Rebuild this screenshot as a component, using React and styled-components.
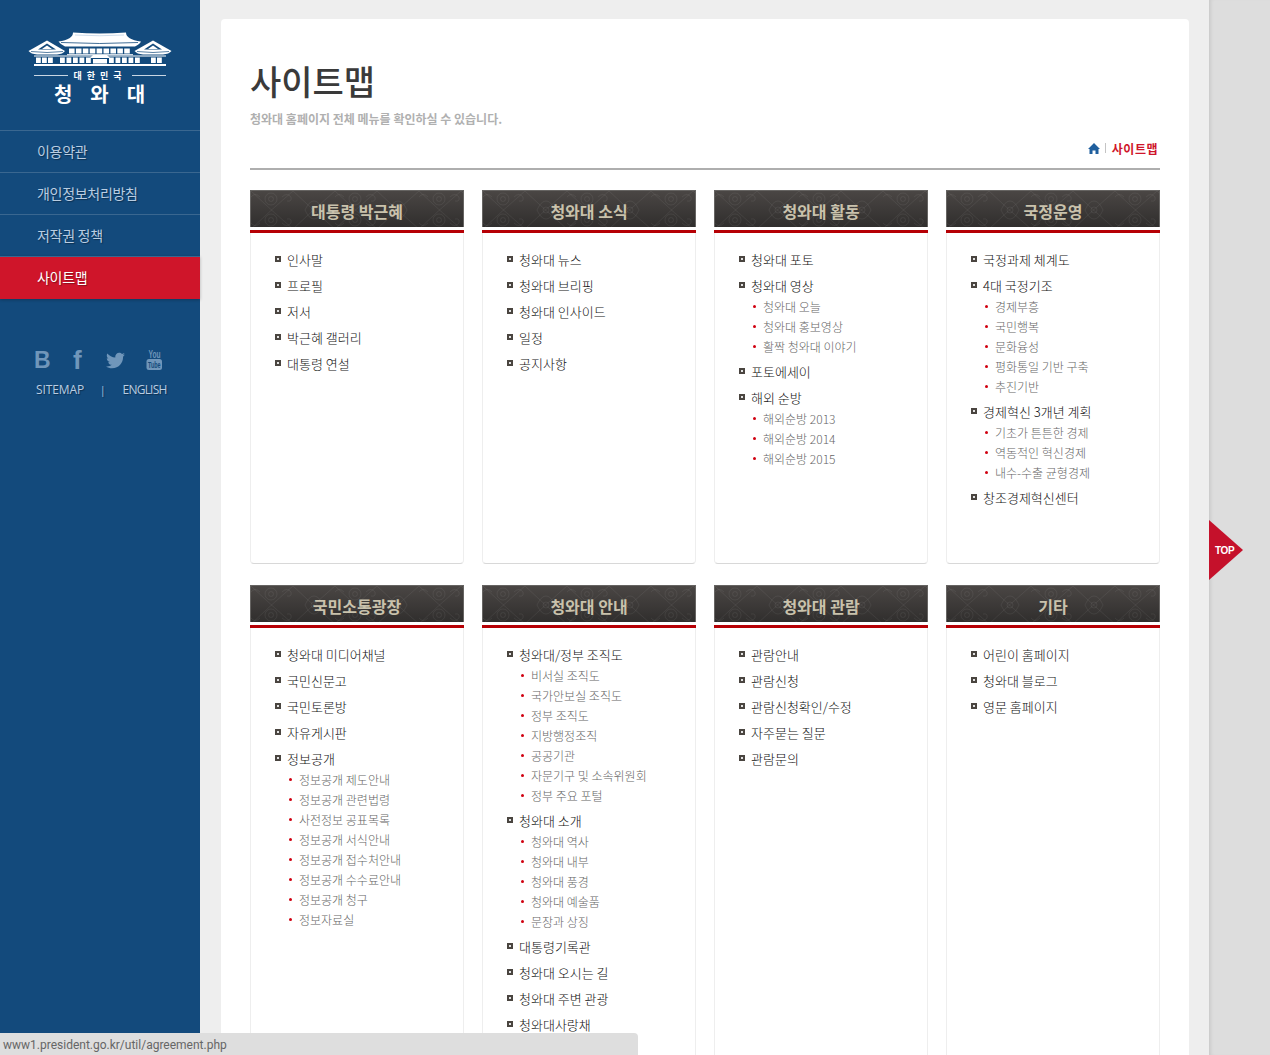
import React from "react";
import styled, { createGlobalStyle } from "styled-components";
import { FaTwitter } from "react-icons/fa";

const KR = `"Noto Sans CJK KR", "Noto Sans", sans-serif`;

const GlobalStyle = createGlobalStyle`
    html, body {
        margin: 0;
        height: 100%;
        overflow: hidden;
        background: #eeeeee;
        font-family: ${KR};
    }
    ul {
        list-style: none;
        margin: 0;
        padding: 0;
    }
`;

const Page = styled.div`
    display: flex;
    height: 100vh;
    overflow: hidden;
`;

const Sidebar = styled.aside`
    flex: 0 0 200px;
    background: #134a7c;
`;

const LogoBox = styled.div`
    height: 130px;
    box-sizing: border-box;
    padding: 31px 0 0 28px;
`;

const LogoMotto = styled.div`
    display: flex;
    align-items: center;
    gap: 5px;
    width: 132px;
    margin: 3px 0 0 6px;
    color: #fff;
    font-size: 9px;
    font-weight: 700;
    line-height: 11px;
    letter-spacing: 5px;
    white-space: nowrap;

    &::before,
    &::after {
        content: "";
        flex: 1;
        height: 1px;
        background: #c9d6e3;
    }
`;

const LogoName = styled.div`
    width: 144px;
    margin-top: 1px;
    text-align: center;
    color: #fff;
    font-size: 20px;
    font-weight: 700;
    line-height: 24px;
    letter-spacing: 18px;
    text-indent: 17px;
    white-space: nowrap;
`;

const SideItem = styled.a`
    display: block;
    height: ${(p) => (p.$active ? "43px" : "42px")};
    box-sizing: border-box;
    padding-left: 37px;
    border-top: 1px solid #3a6790;
    background: ${(p) => (p.$active ? "#cf152a" : "transparent")};
    box-shadow: ${(p) => (p.$active ? "0 1px 3px rgba(0,0,0,.25)" : "none")};
    color: ${(p) => (p.$active ? "#fff" : "#b9cde2")};
    font-size: 14px;
    line-height: 40px;
    letter-spacing: -0.3px;
    text-shadow: 1px 1px 1px rgba(0, 0, 0, 0.35);
`;

const Social = styled.div`
    display: flex;
    align-items: center;
    height: 22px;
    margin: 50px 0 0 34px;
    color: #7096ba;
`;

const SocialLetter = styled.span`
    width: ${(p) => p.$w}px;
    font-family: "Liberation Sans", sans-serif;
    font-size: ${(p) => p.$size}px;
    font-weight: 700;
    line-height: 22px;
`;

const SocialIcon = styled.span`
    display: flex;
    width: ${(p) => p.$w}px;
    font-size: ${(p) => p.$size}px;
`;

const SideLinks = styled.div`
    display: flex;
    align-items: center;
    margin: 11px 0 0 36px;
    color: #b9cde2;
    font-family: "Open Sans", sans-serif;
    font-size: 12px;
    line-height: 16px;
    text-shadow: 1px 1px 1px rgba(0, 0, 0, 0.35);
`;

const SideLink = styled.span`
    letter-spacing: ${(p) => p.$spacing}px;
`;

const SideSep = styled.span`
    margin: 0 17px 0 16px;
    font-size: 10px;
`;

const Main = styled.main`
    flex: 0 0 1009px;
    box-sizing: border-box;
    padding: 19px 20px 0 21px;
`;

const Panel = styled.div`
    box-sizing: border-box;
    width: 968px;
    min-height: 1400px;
    padding: 0 29px;
    background: #fff;
    border-radius: 4px 4px 0 0;
`;

const Title = styled.h1`
    margin: 0;
    padding-top: 37px;
    color: #3a3a3a;
    font-size: 34px;
    font-weight: 500;
    line-height: 50px;
`;

const Subtitle = styled.p`
    margin: 3px 0 0;
    color: #b0b0b0;
    font-size: 12px;
    font-weight: 700;
    line-height: 20px;
`;

const Crumbs = styled.div`
    display: flex;
    justify-content: flex-end;
    align-items: center;
    height: 20px;
    margin-top: 9px;
    padding: 0 2px 10px 0;
    border-bottom: 2px solid #aeaeae;
    color: #cf152a;
    font-size: 12px;
    font-weight: 700;
    letter-spacing: 0.5px;
`;

const HomeIcon = styled.svg`
    width: 12px;
    height: 11px;
    fill: #1f5f9e;
`;

const CrumbSep = styled.span`
    width: 1px;
    height: 10px;
    margin: 0 6px 0 5px;
    background: #c4c4c4;
`;

const Grid = styled.div`
    display: grid;
    grid-template-columns: repeat(4, 214px);
    column-gap: 18px;
    row-gap: 21px;
    margin-top: 20px;
`;

const Card = styled.section`
    display: flex;
    flex-direction: column;
`;

const CardHead = styled.div`
    position: relative;
    height: 37px;
    overflow: hidden;
    box-sizing: border-box;
    border: 1px solid #666462;
    border-bottom: 0;
    background: linear-gradient(#4a4644, #302e2d);
`;

const HeadPattern = styled.svg`
    position: absolute;
    inset: 0;
    width: 100%;
    height: 100%;
`;

const HeadTitle = styled.h2`
    position: relative;
    margin: 0;
    text-align: center;
    color: #c9c2ac;
    font-size: 16px;
    font-weight: 700;
    line-height: 40px;
`;

const RedRule = styled.div`
    height: 3px;
    margin-top: 3px;
    background: #b60005;
`;

const CardBody = styled.div`
    flex: 1;
    padding: 14px 0 52px 24px;
    border: 1px solid #eeeeee;
    border-top: 0;
    border-bottom-color: #d8d8d8;
    border-radius: 0 0 4px 4px;
`;

const MainLink = styled.li`
    position: relative;
    padding-left: 12px;
    color: #111;
    font-size: 13px;
    font-weight: 300;
    line-height: 26px;
    white-space: nowrap;

    &::before {
        content: "";
        position: absolute;
        left: 0;
        top: 9px;
        width: 2px;
        height: 2px;
        border: 2px solid #4a4540;
        background: #e2e2e2;
    }
`;

const SubList = styled.ul`
    margin: -2px 0 2px 12px;
`;

const SubLink = styled.li`
    position: relative;
    padding-left: 12px;
    color: #666;
    font-size: 12px;
    font-weight: 300;
    line-height: 20px;
    white-space: nowrap;

    &::before {
        content: "";
        position: absolute;
        left: 2px;
        top: 8px;
        width: 3px;
        height: 3px;
        border-radius: 50%;
        background: #d00010;
    }
`;

const RightStrip = styled.div`
    position: relative;
    flex: 1;
    background: #dddddd;
    box-shadow: inset 4px 0 4px -3px rgba(0, 0, 0, 0.12);
`;

const TopButton = styled.a`
    position: absolute;
    left: 0;
    top: 520px;
    width: 34px;
    height: 60px;
    padding-left: 6px;
    box-sizing: border-box;
    background: #c5112b;
    clip-path: polygon(0 0, 100% 50%, 0 100%);
    color: #fff;
    font-family: "Liberation Sans", sans-serif;
    font-size: 10px;
    font-weight: 700;
    letter-spacing: -0.4px;
    line-height: 62px;
`;

const StatusBar = styled.div`
    position: fixed;
    left: 0;
    bottom: 0;
    width: 638px;
    height: 22px;
    box-sizing: border-box;
    padding-left: 3px;
    background: #dedede;
    border-radius: 0 4px 0 0;
    color: #666;
    font-family: Roboto, sans-serif;
    font-size: 12px;
    line-height: 24px;
`;

const sections = [
    { title: "대통령 박근혜", items: [["인사말"], ["프로필"], ["저서"], ["박근혜 갤러리"], ["대통령 연설"]] },
    { title: "청와대 소식", items: [["청와대 뉴스"], ["청와대 브리핑"], ["청와대 인사이드"], ["일정"], ["공지사항"]] },
    {
        title: "청와대 활동",
        items: [
            ["청와대 포토"],
            ["청와대 영상", ["청와대 오늘", "청와대 홍보영상", "활짝 청와대 이야기"]],
            ["포토에세이"],
            ["해외 순방", ["해외순방 2013", "해외순방 2014", "해외순방 2015"]],
        ],
    },
    {
        title: "국정운영",
        items: [
            ["국정과제 체계도"],
            ["4대 국정기조", ["경제부흥", "국민행복", "문화융성", "평화통일 기반 구축", "추진기반"]],
            ["경제혁신 3개년 계획", ["기초가 튼튼한 경제", "역동적인 혁신경제", "내수-수출 균형경제"]],
            ["창조경제혁신센터"],
        ],
    },
    {
        title: "국민소통광장",
        items: [
            ["청와대 미디어채널"],
            ["국민신문고"],
            ["국민토론방"],
            ["자유게시판"],
            ["정보공개", ["정보공개 제도안내", "정보공개 관련법령", "사전정보 공표목록", "정보공개 서식안내", "정보공개 접수처안내", "정보공개 수수료안내", "정보공개 청구", "정보자료실"]],
        ],
    },
    {
        title: "청와대 안내",
        items: [
            ["청와대/정부 조직도", ["비서실 조직도", "국가안보실 조직도", "정부 조직도", "지방행정조직", "공공기관", "자문기구 및 소속위원회", "정부 주요 포털"]],
            ["청와대 소개", ["청와대 역사", "청와대 내부", "청와대 풍경", "청와대 예술품", "문장과 상징"]],
            ["대통령기록관"],
            ["청와대 오시는 길"],
            ["청와대 주변 관광"],
            ["청와대사랑채"],
        ],
    },
    { title: "청와대 관람", items: [["관람안내"], ["관람신청"], ["관람신청확인/수정"], ["자주묻는 질문"], ["관람문의"]] },
    { title: "기타", items: [["어린이 홈페이지"], ["청와대 블로그"], ["영문 홈페이지"]] },
];

const sideMenu = ["이용약관", "개인정보처리방침", "저작권 정책", "사이트맵"];

const upperCells = [0, 1, 2, 3, 4, 5, 6, 7, 8];
const lowerCells = [8, 14, 20, 32, 38.5, 45, 51.5, 58, 81, 87.5, 94, 100.5, 107, 123, 129];

// 청와대 건물 로고
const PalaceLogo = () => (
    <svg width="144" height="36" viewBox="0 0 144 36" style={{ display: "block" }}>
        <path
            d="M45 1.5 Q72 3.5 98 1.5 Q98 8.5 113 10.5 Q112 13 107 15.5 L37 15.5 Q32 13 30.5 10.5 Q45 8.5 45 1.5Z"
            fill="#fff"
        />
        <path d="M47 4 Q72 5.5 96 4" stroke="#b9cde2" strokeWidth="0.7" fill="none" />
        <path d="M33 11.5 Q72 13.5 110 11.5" stroke="#134a7c" strokeWidth="0.8" fill="none" />
        <g fill="#fff">
            <path d="M19 9.5 L0.5 20 Q3 23 9 23.5 L29 23.5 Q35 23 37 20 Z" />
            <path d="M125 9.5 L106.5 20 Q109 23 115 23.5 L135 23.5 Q141 23 143.5 20 Z" />
        </g>
        <path d="M19 12.5 L10 18.5 L28 18.5Z M125 12.5 L116 18.5 L134 18.5Z" fill="#134a7c" />
        <path d="M19 14.5 L14 18 L24 18Z M125 14.5 L120 18 L130 18Z" fill="#fff" />
        <path d="M3 20.5 Q19 22.5 35 20.5 M109 20.5 Q125 22.5 141 20.5" stroke="#134a7c" strokeWidth="0.7" fill="none" />
        <g fill="#fff">
            {upperCells.map((i) => (
                <rect key={"u" + i} x={41 + i * 6.9} y="17.5" width="5.6" height="5" />
            ))}
            <rect x="39" y="23.2" width="66" height="1" />
            <rect x="6" y="24.5" width="132" height="1" />
            <rect x="6" y="33" width="132" height="2" />
            {lowerCells.map((x) => (
                <rect key={"l" + x} x={x} y="26.5" width="4.8" height="5.5" />
            ))}
            <path d="M62 27 L65 24 L79 24 L82 27Z" />
            <rect x="65" y="28" width="14" height="4.5" />
        </g>
    </svg>
);

// 헤더 배경 당초무늬
const HeadDecor = ({ id }) => (
    <HeadPattern aria-hidden="true">
        <defs>
            <pattern id={id} width="84" height="38" patternUnits="userSpaceOnUse">
                <g fill="none" stroke="#fff" strokeOpacity="0.055" strokeWidth="1">
                    <circle cx="20" cy="8" r="6" />
                    <circle cx="20" cy="8" r="2.5" />
                    <circle cx="20" cy="29" r="6" />
                    <circle cx="20" cy="29" r="2.5" />
                    <path d="M0 0 Q20 19 42 38 M42 0 Q20 19 0 38 M42 0 Q62 19 84 38 M84 0 Q62 19 42 38" />
                    <path d="M54 19 q4 -9 9 -9 q5 0 9 9 q-4 9 -9 9 q-5 0 -9 -9" />
                    <path d="M31 6 q5 -5 9 0 q1 5 -4 4 M31 32 q5 5 9 0 q1 -5 -4 -4 M9 6 q-5 -5 -9 0 M9 32 q-5 5 -9 0" />
                    <circle cx="63" cy="19" r="3" />
                </g>
            </pattern>
        </defs>
        <rect width="100%" height="100%" fill={`url(#${id})`} />
    </HeadPattern>
);

const YouTubeMark = () => (
    <svg width="17" height="26" viewBox="0 -3 17 26">
        <text x="2.5" y="8" fontSize="10" textLength="12" lengthAdjust="spacingAndGlyphs" fontWeight="700" fontFamily="Liberation Sans, sans-serif" fill="#7096ba">You</text>
        <rect x="0.5" y="9" width="15.5" height="11" rx="2.5" fill="#7096ba" />
        <text x="2" y="18" fontSize="9.5" textLength="12.5" lengthAdjust="spacingAndGlyphs" fontWeight="700" fontFamily="Liberation Sans, sans-serif" fill="#134a7c">Tube</text>
    </svg>
);

const App = () => {
    return (
        <Page>
            <GlobalStyle />
            <Sidebar>
                <LogoBox>
                    <PalaceLogo />
                    <LogoMotto>대한민국</LogoMotto>
                    <LogoName>청와대</LogoName>
                </LogoBox>
                <nav>
                    {sideMenu.map((name, i) => (
                        <SideItem key={name} $active={i === 3}>{name}</SideItem>
                    ))}
                </nav>
                <Social>
                    <SocialLetter $w={39} $size={23}>B</SocialLetter>
                    <SocialLetter $w={33} $size={26}>f</SocialLetter>
                    <SocialIcon $w={40} $size={19}><FaTwitter /></SocialIcon>
                    <YouTubeMark />
                </Social>
                <SideLinks>
                    <SideLink $spacing={-0.1}>SITEMAP</SideLink>
                    <SideSep>|</SideSep>
                    <SideLink $spacing={-0.8}>ENGLISH</SideLink>
                </SideLinks>
            </Sidebar>
            <Main>
                <Panel>
                    <Title>사이트맵</Title>
                    <Subtitle>청와대 홈페이지 전체 메뉴를 확인하실 수 있습니다.</Subtitle>
                    <Crumbs>
                        <HomeIcon viewBox="0 0 12 11">
                            <path d="M6 0 L12 6 L10.5 6 L10.5 11 L7.5 11 L7.5 7.5 L4.5 7.5 L4.5 11 L1.5 11 L1.5 6 L0 6Z" />
                        </HomeIcon>
                        <CrumbSep />
                        <span>사이트맵</span>
                    </Crumbs>
                    <Grid>
                        {sections.map((section, i) => (
                            <Card key={section.title}>
                                <CardHead>
                                    <HeadDecor id={"head-pattern-" + i} />
                                    <HeadTitle>{section.title}</HeadTitle>
                                </CardHead>
                                <RedRule />
                                <CardBody>
                                    <ul>
                                        {section.items.map(([label, subs]) => (
                                            <React.Fragment key={label}>
                                                <MainLink>{label}</MainLink>
                                                {subs && (
                                                    <SubList>
                                                        {subs.map((sub) => (
                                                            <SubLink key={sub}>{sub}</SubLink>
                                                        ))}
                                                    </SubList>
                                                )}
                                            </React.Fragment>
                                        ))}
                                    </ul>
                                </CardBody>
                            </Card>
                        ))}
                    </Grid>
                </Panel>
            </Main>
            <RightStrip>
                <TopButton>TOP</TopButton>
            </RightStrip>
            <StatusBar>www1.president.go.kr/util/agreement.php</StatusBar>
        </Page>
    );
};

export default App;
